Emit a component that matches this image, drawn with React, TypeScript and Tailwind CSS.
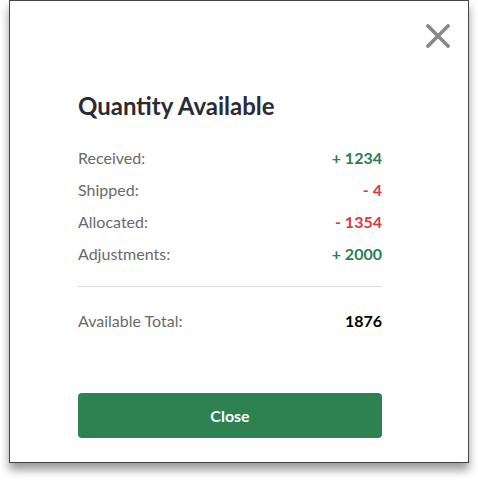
import React from "react";

const rows = [
  { label: "Received:", value: "+ 1234", tone: "text-[#2e7d4f]" },
  { label: "Shipped:", value: "- 4", tone: "text-[#d93a40]" },
  { label: "Allocated:", value: "- 1354", tone: "text-[#d93a40]" },
  { label: "Adjustments:", value: "+ 2000", tone: "text-[#2e7d4f]" },
];

export default function App() {
  return (
    <div className="w-[478px] h-[481px] bg-white font-['Lato','Liberation_Sans',sans-serif]">
      <div className="relative ml-[9px] w-[460px] h-[463px] bg-white border border-[#444] shadow-[0_7px_9px_rgba(0,0,0,0.4)]">
        <button type="button" className="absolute left-[416px] top-[23px] w-[24px] h-[24px]" aria-label="Close">
          <svg width="24" height="24" viewBox="0 0 24 24">
            <path d="M2 2 L22 22 M22 2 L2 22" stroke="#888" strokeWidth="3.6" strokeLinecap="square" fill="none" />
          </svg>
        </button>

        <div className="ml-[68px] w-[304px] pt-[91px]">
          <h2 className="text-[24px] leading-[28px] font-bold text-[#2b2b36]">Quantity Available</h2>

          <div className="mt-[22px]">
            {rows.map((r) => (
              <div key={r.label} className="flex justify-between items-center h-[32px] text-[16px]">
                <span className="text-[#6a6a6a]">{r.label}</span>
                <span className={`font-bold ${r.tone}`}>{r.value}</span>
              </div>
            ))}
          </div>

          <div className="mt-[16px] border-t border-[#ddd]" />

          <div className="mt-[18px] flex justify-between items-center h-[32px] text-[16px]">
            <span className="text-[#6a6a6a]">Available Total:</span>
            <span className="font-bold text-black">1876</span>
          </div>

          <button
            type="button"
            className="mt-[56px] w-full h-[45px] rounded-[4px] bg-[#2e8150] text-white text-[16px] font-bold"
          >
            Close
          </button>
        </div>
      </div>
    </div>
  );
}
